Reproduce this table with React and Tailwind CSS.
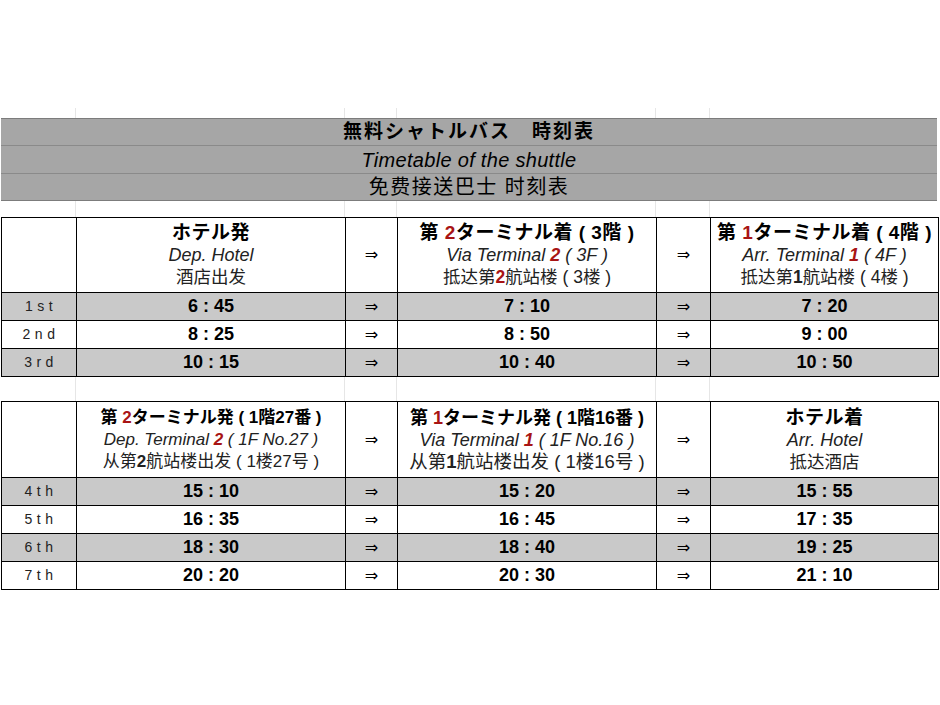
import React from "react";

const JP = "font-['Liberation_Sans','Noto_Sans_CJK_JP',sans-serif]";
const SC = "font-['Liberation_Sans','Noto_Sans_CJK_SC',sans-serif]";

const Red = ({ children }) => (
    <span className="text-[#a81414] font-bold">{children}</span>
);

const cols = [75, 269, 52, 259, 54, 228];

const Spacer = ({ h }) => (
    <div className={`flex ${h}`}>
        <div className="w-[76px] border-r border-[#e6e6e6]" />
        <div className="w-[269px] border-r border-[#e6e6e6]" />
        <div className="w-[52px] border-r border-[#e6e6e6]" />
        <div className="w-[259px] border-r border-[#e6e6e6]" />
        <div className="w-[54px] border-r border-[#e6e6e6]" />
    </div>
);

// sizes vary a little per cell, like the shrink-to-fit sheet it came from
const HeadCell = ({ l1, l2, l3, s1 = "text-[19px] tracking-[0.5px]", s2 = "text-[18px]", s3 = "text-[17.5px]" }) => (
    <td className="border border-black text-center align-middle leading-[22px]">
        <div className={`${JP} font-bold text-black whitespace-nowrap ${s1}`}>{l1}</div>
        <div className={`font-['Liberation_Sans',sans-serif] italic text-[#222] whitespace-nowrap ${s2}`}>{l2}</div>
        <div className={`${SC} text-[#222] whitespace-nowrap ${s3}`}>{l3}</div>
    </td>
);

const Arrow = ({ gray }) => (
    <td
        className={`border border-black text-center text-[16px] text-black font-['DejaVu_Sans',sans-serif] ${
            gray ? "bg-[#c9c9c9]" : "bg-white"
        }`}
    >
        ⇒
    </td>
);

const TimeRow = ({ label, a, b, c, gray }) => {
    const bg = gray ? "bg-[#c9c9c9]" : "bg-white";
    const time = `border border-black text-center font-bold text-[18px] font-['Liberation_Sans',sans-serif] ${bg}`;
    return (
        <tr className="h-[28px]">
            <td className={`border border-black text-center text-[14px] tracking-[0.32em] pl-[4px] text-[#222] font-['Liberation_Sans',sans-serif] ${bg}`}>
                {label}
            </td>
            <td className={time}>{a}</td>
            <Arrow gray={gray} />
            <td className={time}>{b}</td>
            <Arrow gray={gray} />
            <td className={time}>{c}</td>
        </tr>
    );
};

const Table = ({ headers, rows, hh }) => (
    <table className="table-fixed border-collapse w-[937px] ml-[1px]">
        <colgroup>
            {cols.map((w, i) => (
                <col key={i} style={{ width: w }} />
            ))}
        </colgroup>
        <tbody>
            <tr className={hh}>
                <td className="border border-black" />
                <HeadCell {...headers[0]} />
                <Arrow />
                <HeadCell {...headers[1]} />
                <Arrow />
                <HeadCell {...headers[2]} />
            </tr>
            {rows.map((r) => (
                <TimeRow key={r[0]} label={r[0]} a={r[1]} b={r[2]} c={r[3]} gray={r[4]} />
            ))}
        </tbody>
    </table>
);

export default function App() {
    const head1 = [
        { l1: "ホテル発", l2: "Dep. Hotel", l3: "酒店出发" },
        {
            l1: <>第<Red> 2</Red>ターミナル着 ( 3階 )</>,
            l2: <>Via Terminal <Red>2</Red> ( 3F )</>,
            l3: <>抵达第<Red>2</Red>航站楼 ( 3楼 )</>,
        },
        {
            l1: <>第<Red> 1</Red>ターミナル着 ( 4階 )</>,
            l2: <>Arr. Terminal <Red>1</Red> ( 4F )</>,
            l3: <>抵达第<b>1</b>航站楼 ( 4楼 )</>,
        },
    ];
    const head2 = [
        {
            l1: <>第<Red> 2</Red>ターミナル発 ( 1階27番 )</>,
            l2: <>Dep. Terminal <Red>2</Red> ( 1F No.27 )</>,
            l3: <>从第<b>2</b>航站楼出发 ( 1楼27号 )</>,
            s1: "text-[17px]",
            s2: "text-[17px]",
            s3: "text-[17px]",
        },
        {
            l1: <>第<Red> 1</Red>ターミナル発 ( 1階16番 )</>,
            l2: <>Via Terminal <Red>1</Red> ( 1F No.16 )</>,
            l3: <>从第<b>1</b>航站楼出发 ( 1楼16号 )</>,
            s1: "text-[18px]",
            s2: "text-[18px]",
            s3: "text-[18.5px]",
        },
        { l1: "ホテル着", l2: "Arr. Hotel", l3: "抵达酒店" },
    ];
    const rows1 = [
        ["1st", "6 : 45", "7 : 10", "7 : 20", true],
        ["2nd", "8 : 25", "8 : 50", "9 : 00", false],
        ["3rd", "10 : 15", "10 : 40", "10 : 50", true],
    ];
    const rows2 = [
        ["4th", "15 : 10", "15 : 20", "15 : 55", true],
        ["5th", "16 : 35", "16 : 45", "17 : 35", false],
        ["6th", "18 : 30", "18 : 40", "19 : 25", true],
        ["7th", "20 : 20", "20 : 30", "21 : 10", false],
    ];

    return (
        <div className="w-[940px] h-[705px] bg-white pt-[108px] text-black">
            <Spacer h="h-[10px]" />
            <div className="ml-[1px] w-[936px] bg-[#a6a6a6] border-t border-b border-[#7c7c7c] text-center">
                <div className={`h-[27px] border-b border-[#8a8a8a] flex items-center justify-center ${JP} font-bold text-[19px] tracking-[2px]`}>
                    無料シャトルバス　時刻表
                </div>
                <div className="h-[28px] border-b border-[#8a8a8a] flex items-center justify-center font-['Liberation_Sans',sans-serif] italic text-[20px] tracking-[0.3px]">
                    Timetable of the shuttle
                </div>
                <div className={`h-[26px] flex items-center justify-center ${SC} text-[20px] tracking-[1.5px]`}>
                    免费接送巴士 时刻表
                </div>
            </div>
            <Spacer h="h-[16px]" />
            <Table headers={head1} rows={rows1} hh="h-[75px]" />
            <Spacer h="h-[24px]" />
            <Table headers={head2} rows={rows2} hh="h-[76px]" />
        </div>
    );
}
